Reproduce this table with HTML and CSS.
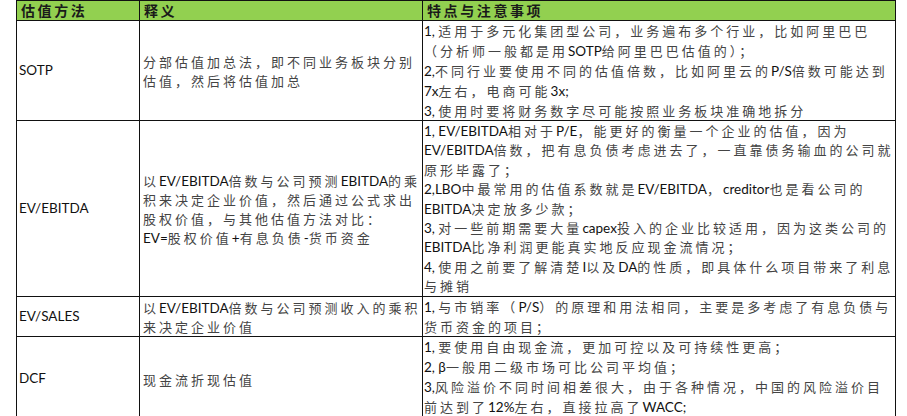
FILE: index.html
```html
<!DOCTYPE html>
<html lang="zh">
<head>
<meta charset="utf-8">
<link rel="stylesheet" href="styles.css">
</head>
<body>
<div class="sheet">
  <div class="hd">估值方法</div>
  <div class="hd">释义</div>
  <div class="hd">特点与注意事项</div>

  <div class="c1"><span class="e">SOTP</span></div>
  <div class="c2"><div>分部估值加总法，即不同业务板块分别<br>估值，然后将估值加总</div></div>
  <div class="c3">
    <div><span class="e">1, </span>适用于多元化集团型公司，业务遍布多个行业，比如阿里巴巴</div>
    <div>（分析师一般都是用<span class="e">SOTP</span>给阿里巴巴估值的）；</div>
    <div><span class="e">2,</span>不同行业要使用不同的估值倍数，比如阿里云的<span class="e">P/S</span>倍数可能达到</div>
    <div><span class="e">7x</span>左右，电商可能<span class="e">3x;</span></div>
    <div><span class="e">3, </span>使用时要将财务数字尽可能按照业务板块准确地拆分</div>
  </div>

  <div class="c1"><span class="e">EV/EBITDA</span></div>
  <div class="c2"><div>以<span class="e">EV/EBITDA</span>倍数与公司预测<span class="e">EBITDA</span>的乘<br>积来决定企业价值，然后通过公式求出<br>股权价值，与其他估值方法对比：<br><span class="e">EV=</span>股权价值<span class="e">+</span>有息负债<span class="e">-</span>货币资金</div></div>
  <div class="c3 tight">
    <div><span class="e">1, EV/EBITDA</span>相对于<span class="e">P/E</span>，能更好的衡量一个企业的估值，因为</div>
    <div><span class="e">EV/EBITDA</span>倍数，把有息负债考虑进去了，一直靠债务输血的公司就</div>
    <div>原形毕露了；</div>
    <div><span class="e">2,LBO</span>中最常用的估值系数就是<span class="e">EV/EBITDA</span>，<span class="e">creditor</span>也是看公司的</div>
    <div><span class="e">EBITDA</span>决定放多少款；</div>
    <div><span class="e">3, </span>对一些前期需要大量<span class="e">capex</span>投入的企业比较适用，因为这类公司的</div>
    <div><span class="e">EBITDA</span>比净利润更能真实地反应现金流情况；</div>
    <div><span class="e">4, </span>使用之前要了解清楚<span class="e">I</span>以及<span class="e">DA</span>的性质，即具体什么项目带来了利息</div>
    <div>与摊销</div>
  </div>

  <div class="c1"><span class="e">EV/SALES</span></div>
  <div class="c2"><div>以<span class="e">EV/EBITDA</span>倍数与公司预测收入的乘积<br>来决定企业价值</div></div>
  <div class="c3">
    <div><span class="e">1, </span>与市销率（<span class="e">P/S</span>）的原理和用法相同，主要是多考虑了有息负债与</div>
    <div>货币资金的项目；</div>
  </div>

  <div class="c1"><span class="e">DCF</span></div>
  <div class="c2"><div>现金流折现估值</div></div>
  <div class="c3">
    <div><span class="e">1, </span>要使用自由现金流，更加可控以及可持续性更高；</div>
    <div><span class="e">2, β</span>一般用二级市场可比公司平均值；</div>
    <div><span class="e">3,</span>风险溢价不同时间相差很大，由于各种情况，中国的风险溢价目</div>
    <div>前达到了<span class="e">12%</span>左右，直接拉高了<span class="e">WACC;</span></div>
  </div>
</div>
</body>
</html>
```

FILE: styles.css
```css
html, body {
  margin: 0;
  padding: 0;
  background: #ffffff;
}

.sheet {
  margin-left: 16px;
  width: 880px;
  display: grid;
  grid-template-columns: 122px 282px 472px;
  grid-template-rows: 19px 99px 175px 39px 84px;
  gap: 1px;
  padding: 1px;
  box-sizing: border-box;
  background: #111111;
  font-family: "Noto Sans CJK SC", sans-serif;
  font-size: 13px;
  color: #444444;
  letter-spacing: 3px;
}

.sheet > div {
  background: #ffffff;
  overflow: hidden;
  white-space: nowrap;
}

.sheet > .hd {
  background: #92d050;
  font-weight: bold;
  font-size: 14px;
  letter-spacing: 2.6px;
  color: #1a1a1a;
  line-height: 19px;
  padding-left: 4px;
}

.e {
  font-family: "Lato", "Liberation Sans", sans-serif;
  letter-spacing: 0;
  font-size: 13.5px;
  line-height: 1;
  color: #111111;
}

.c1 {
  display: flex;
  align-items: center;
  padding-left: 2px;
}

.c2 {
  display: flex;
  align-items: center;
  padding-left: 3px;
  line-height: 19px;
}

.c3 {
  padding-left: 1px;
  line-height: 20px;
}

.c3 > div {
  height: 20px;
}

.c3.tight > div {
  height: 19.4px;
  line-height: 19.4px;
}
```
